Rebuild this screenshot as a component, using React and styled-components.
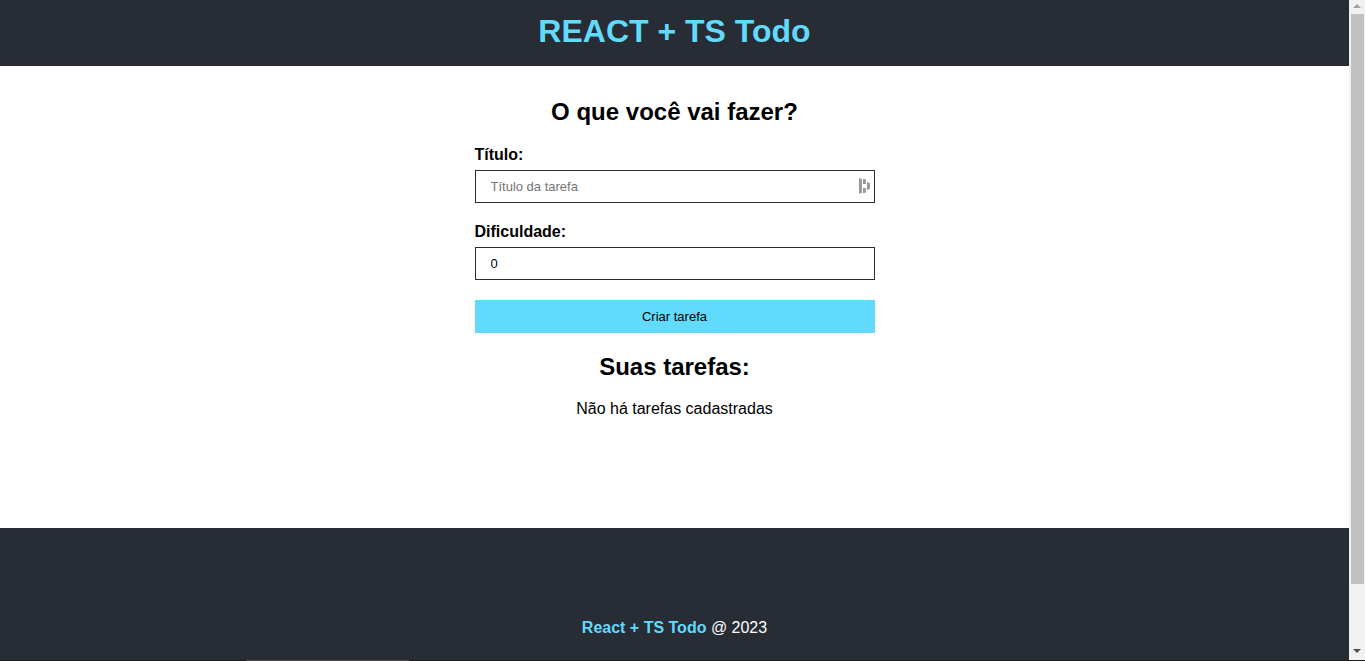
import React, { useState } from "react";
import styled, { createGlobalStyle } from "styled-components";

const GlobalStyle = createGlobalStyle`
  * { box-sizing: border-box; margin: 0; padding: 0; }
  body {
    font-family: "Liberation Sans", Arial, Helvetica, sans-serif;
    font-size: 16px;
    line-height: 18px;
    color: #000;
    background: #fff;
    overflow: hidden;
  }
`;

const Frame = styled.div`
  height: 100vh;
  display: grid;
  grid-template-columns: minmax(0, 1fr) 16px;
  grid-template-rows: minmax(0, 1fr) 1px;
`;

const Page = styled.div`
  display: flex;
  flex-direction: column;
  overflow: hidden;
`;

const Header = styled.header`
  flex: none;
  padding: 13px 16px 17px;
  background: #282c34;
  text-align: center;
`;

const Title = styled.h1`
  color: #61dafb;
  font-size: 32px;
  line-height: 36px;
`;

const Main = styled.main`
  flex: none;
  display: flex;
  flex-direction: column;
  align-items: center;
  gap: 20px;
  padding: 32px 16px 110px;
`;

const Section = styled.section`
  width: 100%;
  max-width: 400px;
`;

const Heading = styled.h2`
  margin-bottom: ${({ $gap }) => $gap};
  font-size: 24px;
  line-height: 28px;
  text-align: center;
`;

const Form = styled.form`
  display: flex;
  flex-direction: column;
  gap: 20px;
`;

const Field = styled.div`
  display: flex;
  flex-direction: column;
  gap: 6px;
`;

const Label = styled.label`
  font-weight: bold;
  line-height: 18px;
`;

const InputBox = styled.div`
  position: relative;
  display: flex;
`;

const Input = styled.input`
  width: 100%;
  height: 33px;
  padding: 0 15px;
  border: 1px solid #282c34;
  border-radius: 0;
  background: #fff;
  font-family: inherit;
  font-size: 13px;
  color: #000;
  &::placeholder { color: #757575; }
`;

const FillIcon = styled.svg`
  position: absolute;
  top: 8px;
  right: 4px;
  width: 12px;
  height: 16px;
  fill: #979797;
`;

const Submit = styled.button`
  height: 33px;
  border: 0;
  background: #61dafb;
  font-family: inherit;
  font-size: 13px;
  color: #000;
  cursor: pointer;
`;

const Empty = styled.p`
  text-align: center;
`;

const Footer = styled.footer`
  flex: none;
  padding: 91px 16px;
  background: #282c34;
  color: #fff;
  text-align: center;
`;

const Brand = styled.strong`
  color: #61dafb;
`;

const ScrollRail = styled.div`
  display: flex;
  flex-direction: column;
  align-items: center;
  background: #f1f1f1;
`;

const Arrow = styled.svg`
  flex: none;
  width: 16px;
  height: 14px;
  fill: ${({ $active }) => ($active ? "#505050" : "#a3a3a3")};
`;

const Track = styled.div`
  flex: 1;
  width: 13px;
`;

const Thumb = styled.div`
  height: 90.2%;
  background: #c1c1c1;
`;

const Edge = styled.div`
  grid-column: 1 / -1;
  display: grid;
  grid-template-columns: 18% 12%;
  background: #1d1b1c;
`;

const EdgeTab = styled.div`
  grid-column: 2;
  background: #504b4d;
`;

export default function App() {
  const [title, setTitle] = useState("");
  const [difficulty, setDifficulty] = useState("0");

  return (
    <>
      <GlobalStyle />
      <Frame>
        <Page>
          <Header>
            <Title>REACT + TS Todo</Title>
          </Header>
          <Main>
            <Section>
              <Heading $gap="20px">O que você vai fazer?</Heading>
              <Form onSubmit={(event) => event.preventDefault()}>
                <Field>
                  <Label htmlFor="title">Título:</Label>
                  <InputBox>
                    <Input
                      id="title"
                      type="text"
                      placeholder="Título da tarefa"
                      value={title}
                      onChange={(event) => setTitle(event.target.value)}
                    />
                    <FillIcon viewBox="0 0 12 16" aria-hidden="true">
                      <path d="M0 .8q0-.6.6-.5l1.8.4q.5.1.5.6v13.2q0 .5-.5.6l-1.8.4q-.6.1-.6-.5z" />
                      <path d="M4 .8l2.3.5q.6.1.6.7v4H4zM4 10h2.9v4q0 .5-.6.7L4 15.2zM8 4.2l2.3.5q.6.1.6.6v5.4q0 .5-.6.6L8 12z" />
                    </FillIcon>
                  </InputBox>
                </Field>
                <Field>
                  <Label htmlFor="difficulty">Dificuldade:</Label>
                  <Input
                    id="difficulty"
                    type="text"
                    inputMode="numeric"
                    value={difficulty}
                    onChange={(event) => setDifficulty(event.target.value)}
                  />
                </Field>
                <Submit type="submit">Criar tarefa</Submit>
              </Form>
            </Section>
            <Section>
              <Heading $gap="19px">Suas tarefas:</Heading>
              <Empty>Não há tarefas cadastradas</Empty>
            </Section>
          </Main>
          <Footer>
            <p>
              <Brand>React + TS Todo</Brand> @ 2023
            </p>
          </Footer>
        </Page>
        <ScrollRail aria-hidden="true">
          <Arrow viewBox="0 0 16 14">
            <path d="M8 4l4 4H4z" />
          </Arrow>
          <Track>
            <Thumb />
          </Track>
          <Arrow viewBox="0 0 16 14" $active>
            <path d="M4 3h8l-4 4z" />
          </Arrow>
        </ScrollRail>
        <Edge aria-hidden="true">
          <EdgeTab />
        </Edge>
      </Frame>
    </>
  );
}
